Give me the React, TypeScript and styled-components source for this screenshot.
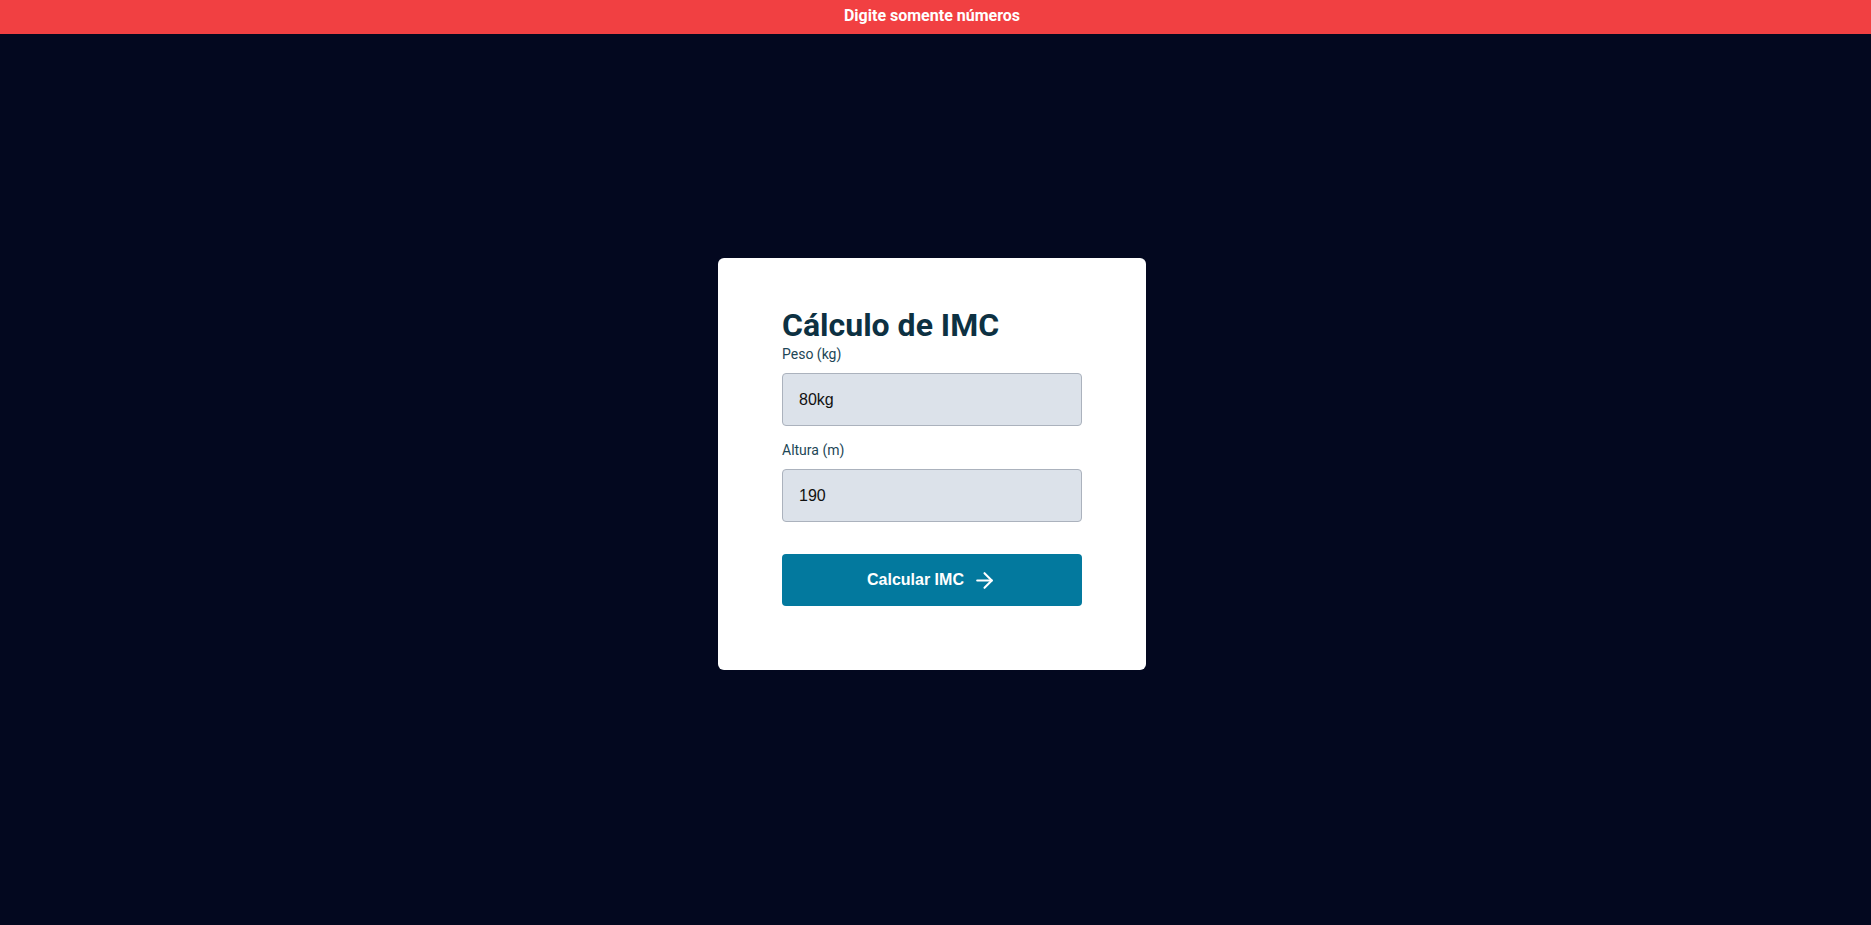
import React from "react";
import styled, { createGlobalStyle } from "styled-components";
import { ArrowRight } from "lucide-react";

const GlobalStyle = createGlobalStyle`
  * { box-sizing: border-box; }
  html, body { margin: 0; padding: 0; }
  body {
    background: #03081f;
    font-family: Roboto, "Liberation Sans", Arial, sans-serif;
  }
`;

const Page = styled.div`
  min-height: 100vh;
  display: flex;
  align-items: center;
  justify-content: center;
  padding: 3px 7px 0 0;
`;

const Toast = styled.div`
  position: fixed;
  top: 0;
  left: 0;
  right: 0;
  height: 34px;
  padding: 6px 7px 0 0;
  background: #f14042;
  color: #ffffff;
  font-weight: 700;
  font-size: 16px;
  line-height: normal;
  text-align: center;
`;

const Card = styled.form`
  width: 428px;
  background: #ffffff;
  border-radius: 6px;
  padding: 48px 64px 64px;
  display: flex;
  flex-direction: column;
`;

const Title = styled.h1`
  margin: 0;
  font-size: 32px;
  font-weight: 700;
  line-height: normal;
  color: #0d3142;
`;

const Field = styled.div<{ $last?: boolean }>`
  display: flex;
  flex-direction: column;
  margin-bottom: ${(p) => (p.$last ? "32px" : "14px")};
`;

const Label = styled.label`
  font-size: 14px;
  line-height: 21px;
  color: #1d4656;
  margin-bottom: 8px;
`;

const Input = styled.input`
  height: 53px;
  width: 100%;
  padding: 0 16px;
  background: #dce2ea;
  border: 1px solid #abb2bd;
  border-radius: 4px;
  font-family: "Liberation Sans", Arial, sans-serif;
  font-size: 16px;
  color: #111111;
  outline: none;
`;

const Button = styled.button`
  height: 52px;
  width: 100%;
  border: none;
  border-radius: 4px;
  background: #03799e;
  color: #ffffff;
  font-family: "Liberation Sans", Arial, sans-serif;
  font-size: 16px;
  font-weight: 700;
  display: flex;
  align-items: center;
  justify-content: center;
  gap: 8px;
  cursor: pointer;
`;

export default function App() {
  return (
    <>
      <GlobalStyle />
      <Toast>Digite somente números</Toast>
      <Page>
        <Card onSubmit={(e) => e.preventDefault()}>
          <Title>Cálculo de IMC</Title>
          <Field>
            <Label htmlFor="peso">Peso (kg)</Label>
            <Input id="peso" defaultValue="80kg" />
          </Field>
          <Field $last>
            <Label htmlFor="altura">Altura (m)</Label>
            <Input id="altura" defaultValue="190" />
          </Field>
          <Button type="submit">
            Calcular IMC
            <ArrowRight size={25} strokeWidth={2} />
          </Button>
        </Card>
      </Page>
    </>
  );
}
